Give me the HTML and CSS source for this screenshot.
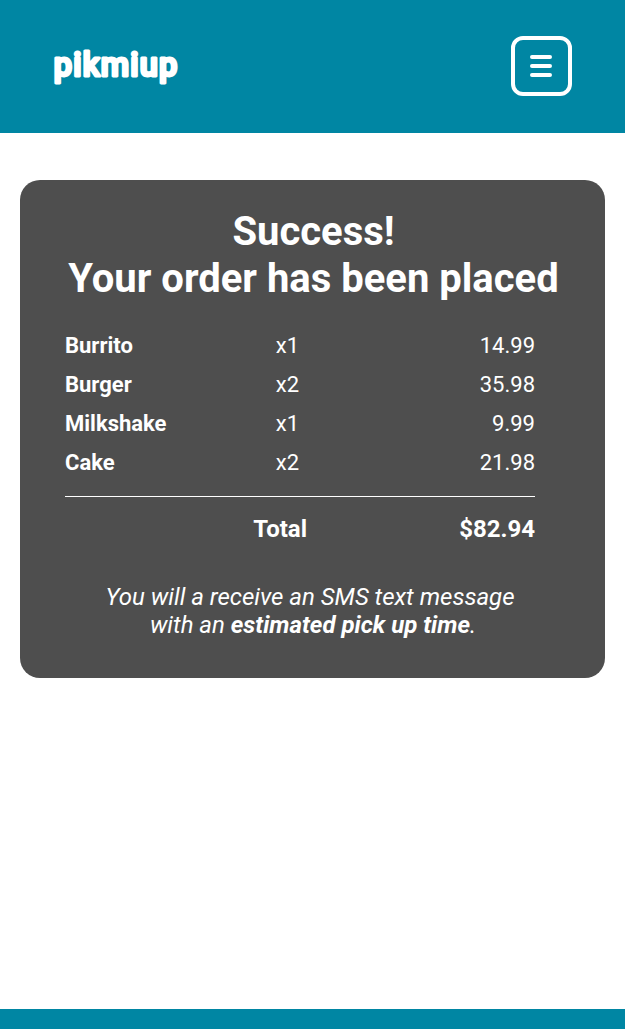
FILE: index.html
```
<!DOCTYPE html>
<html lang="en">
<head>
<meta charset="utf-8">
<title>pikmiup</title>
<link rel="stylesheet" href="styles.css">
</head>
<body>
<header class="header">
  <svg class="logo" width="126" height="40" viewBox="0 0 126 40" role="img" aria-label="pikmiup"><text x="0.8" y="29" textLength="123.5" lengthAdjust="spacing">pikmiup</text></svg>
  <button class="menu" aria-label="Menu">
    <svg width="22" height="22" viewBox="0 0 22 22" stroke="#fff" stroke-width="4" stroke-linecap="round"><path d="M2 2H20M2 11H20M2 20H20"/></svg>
  </button>
</header>
<main class="main">
  <section class="card">
    <h1 class="title">Success!<br>Your order has been placed</h1>
    <div class="items">
      <div class="row"><b>Burrito</b><span class="qty">x1</span><span class="price">14.99</span></div>
      <div class="row"><b>Burger</b><span class="qty">x2</span><span class="price">35.98</span></div>
      <div class="row"><b>Milkshake</b><span class="qty">x1</span><span class="price">9.99</span></div>
      <div class="row"><b>Cake</b><span class="qty">x2</span><span class="price">21.98</span></div>
    </div>
    <div class="total"><span class="total-label">Total</span><span class="price">$82.94</span></div>
    <p class="note">You will a receive an SMS text message&nbsp;<br>with an <b>estimated pick up time</b>.</p>
  </section>
</main>
<footer class="footer"></footer>
</body>
</html>
```
FILE: styles.css
```
* { box-sizing: border-box; }
body { margin: 0; height: 1029px; display: flex; flex-direction: column; background: #fff; color: #fff; font-family: Roboto, sans-serif; }
.header { height: 133px; background: #0086a3; display: flex; justify-content: space-between; align-items: flex-start; padding: 36px 53px 0; }
.logo { margin-top: 11px; overflow: visible; font-size: 32.5px; font-weight: 500; fill: #fff; stroke: #fff; stroke-width: 2.9px; stroke-linejoin: round; }
.menu { width: 61px; height: 60px; border: 4px solid #fff; border-radius: 12px; background: none; padding: 0 1px 0 0; display: flex; align-items: center; justify-content: center; }
.main { flex: 1; padding: 47px 20px 0; }
.card { height: 498px; border-radius: 20px; background: #4e4e4e; padding: 28px 45px 0; }
.title { margin: 0 -21px 0 -19px; font-size: 40px; line-height: 47px; font-weight: 700; text-align: center; white-space: nowrap; }
.items { width: 470px; margin-top: 24px; height: 171px; border-bottom: 1px solid #fff; }
.row { display: grid; grid-template-columns: 195px 55px 220px; height: 39px; line-height: 39px; font-size: 22px; }
.qty { text-align: center; }
.price { text-align: right; }
.total { width: 470px; display: grid; grid-template-columns: 242px 228px; margin-top: 18px; font-size: 24px; line-height: 28px; font-weight: 700; }
.total-label { text-align: right; }
.note { margin: 40px 0 0; padding-left: 1px; font-size: 24px; line-height: 28px; font-style: italic; text-align: center; }
.footer { height: 20px; background: #0086a3; }
```
